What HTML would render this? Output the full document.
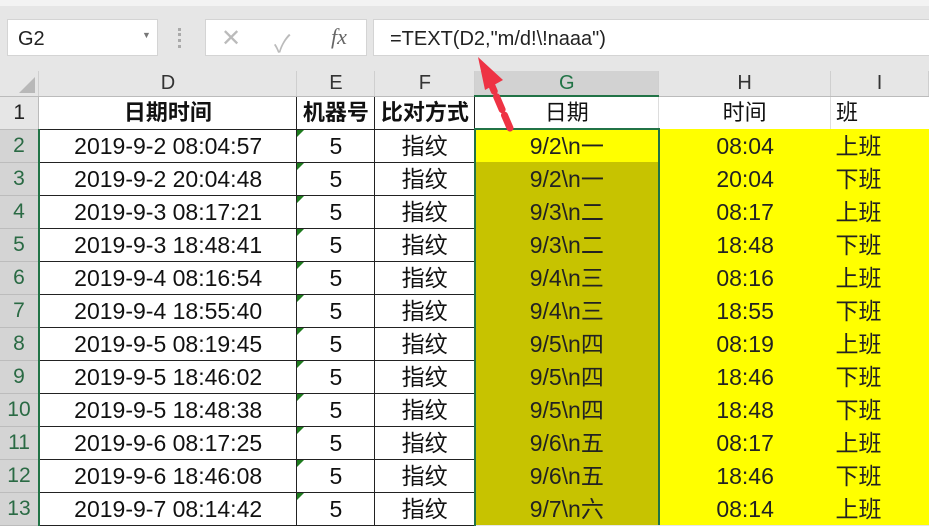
<!DOCTYPE html>
<html><head><meta charset="utf-8"><style>
body{margin:0;width:929px;height:521px;overflow:hidden;background:#e6e6e6;position:relative;font-family:"Liberation Sans","Microsoft YaHei","Noto Sans CJK SC",sans-serif}
.a{position:absolute;box-sizing:border-box}
table{position:absolute;left:0;top:71px;border-collapse:collapse;table-layout:fixed}
td{padding:0;text-align:center;font-size:23px;line-height:28px;color:#111;overflow:hidden;white-space:nowrap;box-sizing:border-box;vertical-align:middle}
tr.h td{height:25px;line-height:22px;background:#e6e6e6;color:#333;font-size:20px;border-right:1px solid #cfcfcf;border-bottom:1px solid #bbb}
tr.r td{height:33px}
td.rh{background:#d4d4d4;color:#2a6a44;font-size:21px;border-bottom:1px solid #bcbcbc;border-right:2px solid #217346}
td.b{border:1px solid #222;background:#fff}
td.y{background:#ffff00;color:#222}
td.o{background:#c7c300;color:#222}
td.e{position:relative}
td.e:before{content:"";position:absolute;left:0;top:0;border-top:7px solid #1e7b1e;border-right:7px solid transparent}
td.l{text-align:left;padding-left:5px}
</style></head><body>
<div class="a" style="left:0;top:0;width:929px;height:6px;background:#f3f3f3"></div>
<div class="a" style="left:7px;top:19px;width:151px;height:37px;background:#fff;border:1px solid #d4d4d4;font-size:20px;padding:8px 0 0 10px;color:#222">G2<span style="position:absolute;left:134px;top:10px;font-size:9px;color:#777">▼</span></div>
<div class="a" style="left:178px;top:28px;width:3px;height:20px;border-left:3px dotted #aaa"></div>
<div class="a" style="left:205px;top:19px;width:162px;height:37px;background:#fff;border:1px solid #d4d4d4"></div>
<div class="a" style="left:221px;top:24px;font-size:24px;color:#bbb">✕</div>
<div class="a" style="left:274px;top:24px;font-size:24px;color:#bbb">✓</div>
<div class="a" style="left:331px;top:24px;font-size:22px;color:#666;font-style:italic;font-family:'Liberation Serif',serif">fx</div>
<div class="a" style="left:373px;top:19px;width:570px;height:37px;background:#fff;border:1px solid #d4d4d4;font-size:20px;padding:8px 0 0 16px;color:#222">=TEXT(D2,"m/d!\!naaa")</div>
<table>
<colgroup><col style="width:39px"><col style="width:258px"><col style="width:78px"><col style="width:100px"><col style="width:184px"><col style="width:172px"><col style="width:98px"></colgroup>
<tr class="h"><td style="background:#e6e6e6;position:relative"><div style="position:absolute;right:3px;bottom:3px;border-bottom:16px solid #b8b8b8;border-left:16px solid transparent"></div></td><td>D</td><td>E</td><td>F</td><td style="background:#d2d2d2;color:#217346;border-bottom:2px solid #217346">G</td><td>H</td><td>I</td></tr>
<tr class="r"><td class="rh" style="background:#e6e6e6;color:#222;border-right:1px solid #bbb">1</td><td class="b" style="font-weight:bold;font-size:22px">日期时间</td><td class="b" style="font-weight:bold;font-size:22px">机器号</td><td class="b" style="font-weight:bold;font-size:22px">比对方式</td><td style="background:#fff;border-right:1px solid #ddd;font-size:22px">日期</td><td style="background:#fff;border-right:1px solid #ddd;font-size:22px">时间</td><td class="l" style="background:#fff;font-size:22px">班</td></tr>
<tr class="r"><td class="rh">2</td><td class="b">2019-9-2 08:04:57</td><td class="b e">5</td><td class="b">指纹</td><td class="y" style="border:2px solid #217346;border-bottom:none">9/2\n一</td><td class="y">08:04</td><td class="y l">上班</td></tr>
<tr class="r"><td class="rh">3</td><td class="b">2019-9-2 20:04:48</td><td class="b e">5</td><td class="b">指纹</td><td class="o" style="border-left:2px solid #217346;border-right:2px solid #217346">9/2\n一</td><td class="y">20:04</td><td class="y l">下班</td></tr>
<tr class="r"><td class="rh">4</td><td class="b">2019-9-3 08:17:21</td><td class="b e">5</td><td class="b">指纹</td><td class="o" style="border-left:2px solid #217346;border-right:2px solid #217346">9/3\n二</td><td class="y">08:17</td><td class="y l">上班</td></tr>
<tr class="r"><td class="rh">5</td><td class="b">2019-9-3 18:48:41</td><td class="b e">5</td><td class="b">指纹</td><td class="o" style="border-left:2px solid #217346;border-right:2px solid #217346">9/3\n二</td><td class="y">18:48</td><td class="y l">下班</td></tr>
<tr class="r"><td class="rh">6</td><td class="b">2019-9-4 08:16:54</td><td class="b e">5</td><td class="b">指纹</td><td class="o" style="border-left:2px solid #217346;border-right:2px solid #217346">9/4\n三</td><td class="y">08:16</td><td class="y l">上班</td></tr>
<tr class="r"><td class="rh">7</td><td class="b">2019-9-4 18:55:40</td><td class="b e">5</td><td class="b">指纹</td><td class="o" style="border-left:2px solid #217346;border-right:2px solid #217346">9/4\n三</td><td class="y">18:55</td><td class="y l">下班</td></tr>
<tr class="r"><td class="rh">8</td><td class="b">2019-9-5 08:19:45</td><td class="b e">5</td><td class="b">指纹</td><td class="o" style="border-left:2px solid #217346;border-right:2px solid #217346">9/5\n四</td><td class="y">08:19</td><td class="y l">上班</td></tr>
<tr class="r"><td class="rh">9</td><td class="b">2019-9-5 18:46:02</td><td class="b e">5</td><td class="b">指纹</td><td class="o" style="border-left:2px solid #217346;border-right:2px solid #217346">9/5\n四</td><td class="y">18:46</td><td class="y l">下班</td></tr>
<tr class="r"><td class="rh">10</td><td class="b">2019-9-5 18:48:38</td><td class="b e">5</td><td class="b">指纹</td><td class="o" style="border-left:2px solid #217346;border-right:2px solid #217346">9/5\n四</td><td class="y">18:48</td><td class="y l">下班</td></tr>
<tr class="r"><td class="rh">11</td><td class="b">2019-9-6 08:17:25</td><td class="b e">5</td><td class="b">指纹</td><td class="o" style="border-left:2px solid #217346;border-right:2px solid #217346">9/6\n五</td><td class="y">08:17</td><td class="y l">上班</td></tr>
<tr class="r"><td class="rh">12</td><td class="b">2019-9-6 18:46:08</td><td class="b e">5</td><td class="b">指纹</td><td class="o" style="border-left:2px solid #217346;border-right:2px solid #217346">9/6\n五</td><td class="y">18:46</td><td class="y l">下班</td></tr>
<tr class="r"><td class="rh">13</td><td class="b">2019-9-7 08:14:42</td><td class="b e">5</td><td class="b">指纹</td><td class="o" style="border-left:2px solid #217346;border-right:2px solid #217346">9/7\n六</td><td class="y">08:14</td><td class="y l">上班</td></tr>
</table>
<svg class="a" style="left:0;top:0" width="929" height="521">
<line x1="510" y1="128" x2="492" y2="86" stroke="#ee3344" stroke-width="7" stroke-dasharray="14,6" stroke-linecap="round"/>
<polygon points="478,57 503,80 485,90" fill="#ee3344"/>
</svg>
</body></html>
